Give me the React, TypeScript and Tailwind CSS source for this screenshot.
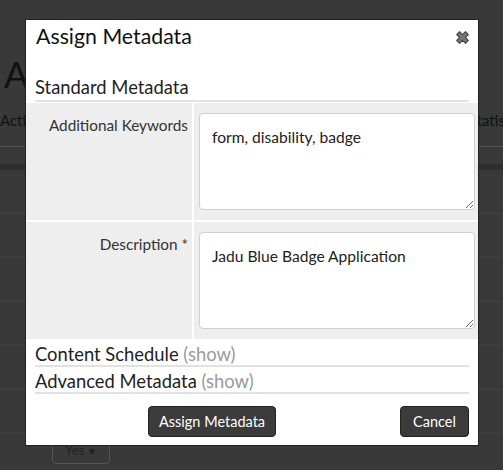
import React from "react";

const font = { fontFamily: "Lato, 'Open Sans', Arial, sans-serif" };

function Background() {
  return (
    <div className="h-[470px] w-[503px] overflow-hidden bg-[#393939] text-[#1c1c1c]" style={font}>
      <div className="h-[54px]" />
      <div className="pl-[4px] text-[36px] leading-[40px] text-[#111]">Ac</div>
      <div className="mt-[16px] flex justify-between text-[15px] leading-[20px] text-[#111]">
        <span>Actions</span>
        <span className="-mr-[25px]">Statistics</span>
      </div>
      <div className="mt-[16px] h-px bg-[#555]" />
      <div className="mt-[17px] h-[6px] bg-[#2e2e2e]" />
      {[0, 1, 2, 3, 4, 5].map((i) => (
        <div key={i} className="h-[44px] border-b border-[#414141]" />
      ))}
      <div className="ml-[52px] mt-[4px] flex h-[26px] w-[58px] items-center justify-between rounded-[4px] border border-[#555] px-[12px] text-[13px] text-[#222]">
        <span>Yes</span>
        <span className="text-[10px]">▼</span>
      </div>
    </div>
  );
}

function Row({ label, value }: { label: string; value: string }) {
  return (
    <div className="flex">
      <div className="w-[166px] shrink-0 pr-[4px] pt-[12px] text-right text-[15.3px] leading-[20px] text-[#333]">
        {label}
      </div>
      <div className="w-[2px] shrink-0 bg-white" />
      <div className="flex-1 py-[10px] pl-[5px] pr-[3px]">
        <textarea
          readOnly
          defaultValue={value}
          className="block h-[97px] w-full resize-y rounded-[4px] border border-[#cfcfcf] bg-white px-[12px] pt-[13px] text-[15.6px] leading-[20px] text-[#222] outline-none"
          style={font}
        />
      </div>
    </div>
  );
}

export default function App() {
  return (
    <div className="relative h-[470px] w-[503px] overflow-hidden">
      <Background />
      <div
        className="absolute left-[25px] top-[19px] w-[454px] border border-[#222] bg-white"
        style={font}
      >
        <div className="flex items-start justify-between pl-[10px] pr-[7px] pt-[3px]">
          <h2 className="text-[21.3px] leading-[27px] text-[#111]">Assign Metadata</h2>
          <svg width="17" height="17" viewBox="0 0 16 16" className="mt-[6px]">
            <path
              d="M2.5 5.2 5.2 2.5 8 5.3 10.8 2.5 13.5 5.2 10.7 8 13.5 10.8 10.8 13.5 8 10.7 5.2 13.5 2.5 10.8 5.3 8Z"
              fill="#757575"
              stroke="#444"
              strokeWidth="1"
              strokeLinejoin="round"
            />
          </svg>
        </div>
        <div className="mx-[9px] mt-[26px] border-b-2 border-[#e2e2e2] pb-[2px] text-[18.4px] leading-[22px] text-[#222]">
          Standard Metadata
        </div>
        <div className="mt-px bg-[#eeeeee]">
          <Row label="Additional Keywords" value="form, disability, badge" />
          <div className="h-[2px] bg-white" />
          <Row label="Description *" value="Jadu Blue Badge Application" />
        </div>
        <div className="mx-[9px] mt-[4px] border-b-2 border-[#e2e2e2] text-[18.4px] leading-[22px] text-[#222]">
          Content Schedule <span className="text-[#9a9a9a]">(show)</span>
        </div>
        <div className="mx-[9px] mt-[3px] border-b-2 border-[#e2e2e2] text-[18.4px] leading-[22px] text-[#222]">
          Advanced Metadata <span className="text-[#9a9a9a]">(show)</span>
        </div>
        <div className="flex justify-between pb-[8px] pl-[122px] pr-[9px] pt-[12px]">
          <button className="h-[31px] w-[128px] rounded-[4px] border border-[#222] bg-[#3b3b3b] text-[14.5px] text-white">
            Assign Metadata
          </button>
          <button className="h-[31px] w-[69px] rounded-[4px] border border-[#222] bg-[#3b3b3b] text-[14.5px] text-white">
            Cancel
          </button>
        </div>
      </div>
    </div>
  );
}
